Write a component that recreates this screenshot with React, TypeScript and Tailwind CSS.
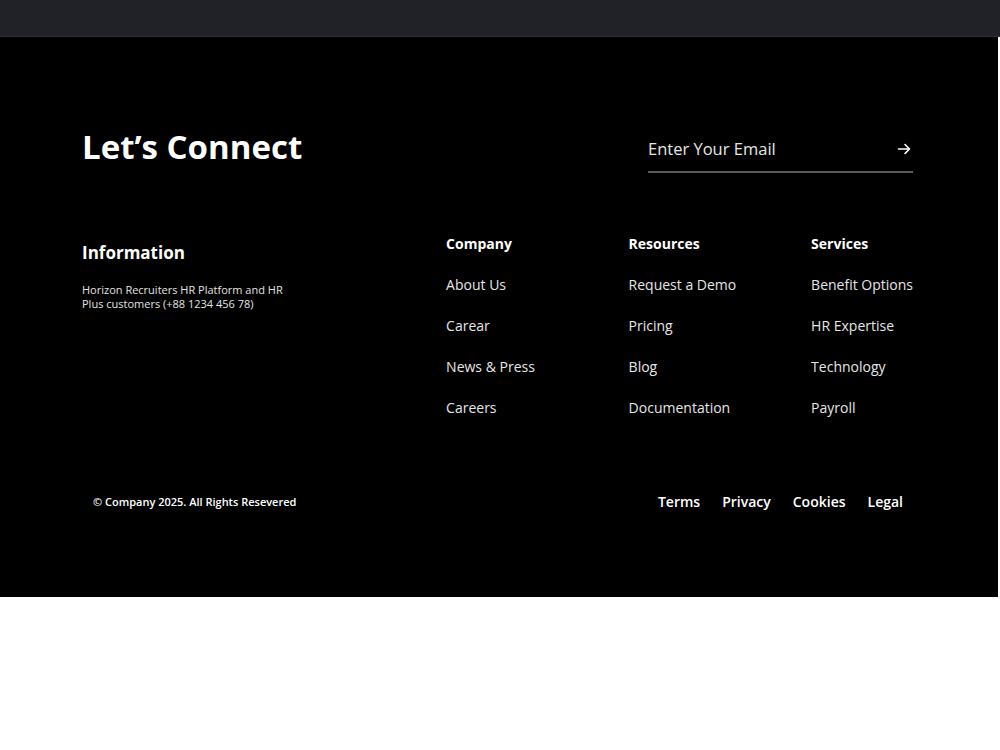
import React from "react";

const cols = [
  { title: "Company", links: ["About Us", "Carear", "News & Press", "Careers"] },
  { title: "Resources", links: ["Request a Demo", "Pricing", "Blog", "Documentation"] },
  { title: "Services", links: ["Benefit Options", "HR Expertise", "Technology", "Payroll"] },
];

export default function App() {
  return (
    <div className="w-[1000px] min-h-[750px] bg-white" style={{ fontFamily: '"Open Sans", sans-serif' }}>
      <div className="h-[37px] bg-[#212227] border-b border-[#2e2f35]" />
      <footer className="w-[998px] h-[560px] bg-black text-white pl-[82px] pr-[85px] pt-[90px]">
        <div className="flex justify-between items-start">
          <h2 className="text-[33px] leading-[40px] font-bold">Let’s Connect</h2>
          <div className="w-[265px] mt-[10px] border-b-2 border-[#5a5a5a] pb-[10px] flex items-center justify-between">
            <span className="text-[16.5px] leading-[24px] text-[#e6e6e6]">Enter Your Email</span>
            <svg width="14" height="12" viewBox="0 0 14 12" fill="none" stroke="white" strokeWidth="1.6" strokeLinecap="round" strokeLinejoin="round" className="mr-[2px]">
              <path d="M1.5 6h11M8 1.5 12.5 6 8 10.5" />
            </svg>
          </div>
        </div>
        <div className="flex justify-between mt-[61px]">
          <div className="pt-[5px]">
            <h3 className="text-[17px] leading-[28px] font-bold">Information</h3>
            <p className="mt-[16px] text-[11px] leading-[14px] text-[#e3e3e3] w-[220px]">
              Horizon Recruiters HR Platform and HR Plus customers (+88 1234 456 78)
            </p>
          </div>
          <div className="flex">
            {cols.map((c, i) => (
              <div key={c.title} className={i < 2 ? "w-[182.5px]" : ""}>
                <h4 className="text-[14px] leading-[20px] font-bold">{c.title}</h4>
                <ul className="mt-[21px] flex flex-col gap-[21px]">
                  {c.links.map((l) => (
                    <li key={l} className="text-[14px] leading-[20px] text-[#e6e6e6]">{l}</li>
                  ))}
                </ul>
              </div>
            ))}
          </div>
        </div>
        <div className="flex justify-between items-center mt-[74px] pl-[11px] pr-[10px]">
          <span className="text-[11px] leading-[20px] font-semibold">© Company 2025. All Rights Resevered</span>
          <div className="flex gap-[22px] text-[14px] leading-[20px] font-semibold">
            <span>Terms</span>
            <span>Privacy</span>
            <span>Cookies</span>
            <span>Legal</span>
          </div>
        </div>
      </footer>
    </div>
  );
}
